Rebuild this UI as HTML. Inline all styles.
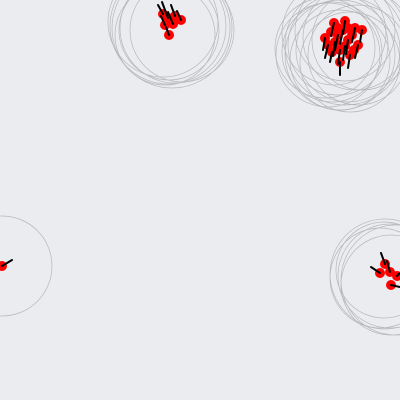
<!DOCTYPE html>
<html><head><style>html,body{margin:0;padding:0;background:#ebecf0;}svg{display:block}</style></head>
<body>
<svg width="400" height="400" viewBox="0 0 400 400">
<rect width="400" height="400" fill="#ebecf0"/>
<g fill="none" stroke="#aaa" stroke-width="0.7" opacity="0.8">
<circle cx="334" cy="33" r="52"/><circle cx="345" cy="31" r="50"/><circle cx="355" cy="38" r="52"/>
<circle cx="362" cy="40" r="50"/><circle cx="325" cy="48" r="50"/><circle cx="328" cy="55" r="52"/>
<circle cx="338" cy="45" r="50"/><circle cx="348" cy="50" r="52"/><circle cx="358" cy="55" r="50"/>
<circle cx="340" cy="60" r="50"/><circle cx="350" cy="62" r="50"/><circle cx="340" cy="55" r="55"/>
<circle cx="332" cy="52" r="50"/><circle cx="345" cy="45" r="60"/>
<circle cx="163" cy="22" r="55"/><circle cx="168" cy="26" r="58"/><circle cx="175" cy="28" r="55"/>
<circle cx="182" cy="30" r="52"/><circle cx="165" cy="35" r="50"/><circle cx="172" cy="28" r="60"/>
<circle cx="169" cy="30" r="50"/>
<circle cx="2" cy="266" r="50"/>
<circle cx="385" cy="274" r="55"/><circle cx="380" cy="278" r="50"/><circle cx="390" cy="276" r="52"/>
<circle cx="396" cy="280" r="55"/><circle cx="391" cy="285" r="50"/><circle cx="384" cy="270" r="48"/>
</g>
<g fill="#f00">
<circle cx="334" cy="23" r="5"/><circle cx="345" cy="21" r="5"/><circle cx="355" cy="28" r="5"/>
<circle cx="362" cy="30" r="5"/><circle cx="325" cy="38" r="5"/><circle cx="328" cy="45" r="5"/>
<circle cx="338" cy="35" r="5"/><circle cx="348" cy="40" r="5"/><circle cx="358" cy="45" r="5"/>
<circle cx="340" cy="50" r="5"/><circle cx="350" cy="55" r="5"/><circle cx="340" cy="62" r="5"/>
<circle cx="332" cy="52" r="5"/><circle cx="352" cy="35" r="5"/><circle cx="343" cy="30" r="5"/>
<circle cx="335" cy="42" r="5"/><circle cx="345" cy="46" r="5"/><circle cx="354" cy="50" r="5"/>
<circle cx="338" cy="28" r="5"/><circle cx="348" cy="28" r="5"/><circle cx="331" cy="32" r="5"/>
<circle cx="163" cy="14" r="5"/><circle cx="168" cy="18" r="5"/><circle cx="175" cy="16" r="5"/>
<circle cx="181" cy="20" r="5"/><circle cx="165" cy="25" r="5"/><circle cx="173" cy="24" r="5"/>
<circle cx="169" cy="35" r="5"/>
<circle cx="2" cy="266" r="5"/>
<circle cx="385" cy="264" r="5"/><circle cx="380" cy="273" r="5"/><circle cx="390" cy="272" r="5"/>
<circle cx="397" cy="276" r="5"/><circle cx="391" cy="285" r="5"/>
</g>
<g stroke="#000" stroke-width="2" stroke-linecap="round">
<line x1="334" y1="23" x2="331" y2="36"/><line x1="345" y1="21" x2="343" y2="34"/><line x1="355" y1="28" x2="352" y2="42"/>
<line x1="362" y1="30" x2="360" y2="42"/><line x1="325" y1="38" x2="323" y2="50"/><line x1="328" y1="45" x2="325" y2="58"/>
<line x1="338" y1="35" x2="335" y2="50"/><line x1="348" y1="40" x2="346" y2="54"/><line x1="358" y1="45" x2="355" y2="58"/>
<line x1="340" y1="50" x2="338" y2="64"/><line x1="350" y1="55" x2="348" y2="68"/><line x1="340" y1="62" x2="340" y2="75"/>
<line x1="332" y1="52" x2="330" y2="62"/><line x1="343" y1="30" x2="340" y2="44"/>
<line x1="345" y1="46" x2="343" y2="60"/><line x1="335" y1="42" x2="333" y2="56"/>
<line x1="163" y1="14" x2="158" y2="5"/><line x1="168" y1="18" x2="162" y2="2"/><line x1="175" y1="16" x2="171" y2="5"/>
<line x1="181" y1="20" x2="177" y2="11"/><line x1="165" y1="25" x2="161" y2="16"/><line x1="173" y1="24" x2="168" y2="12"/>
<line x1="169" y1="35" x2="166" y2="27"/>
<line x1="2" y1="266" x2="12" y2="260"/>
<line x1="385" y1="264" x2="381" y2="253"/><line x1="380" y1="273" x2="371" y2="267"/><line x1="390" y1="272" x2="387" y2="261"/>
<line x1="391" y1="285" x2="400" y2="287"/><line x1="397" y1="276" x2="400" y2="273"/>
</g>
</svg>
</body></html>
